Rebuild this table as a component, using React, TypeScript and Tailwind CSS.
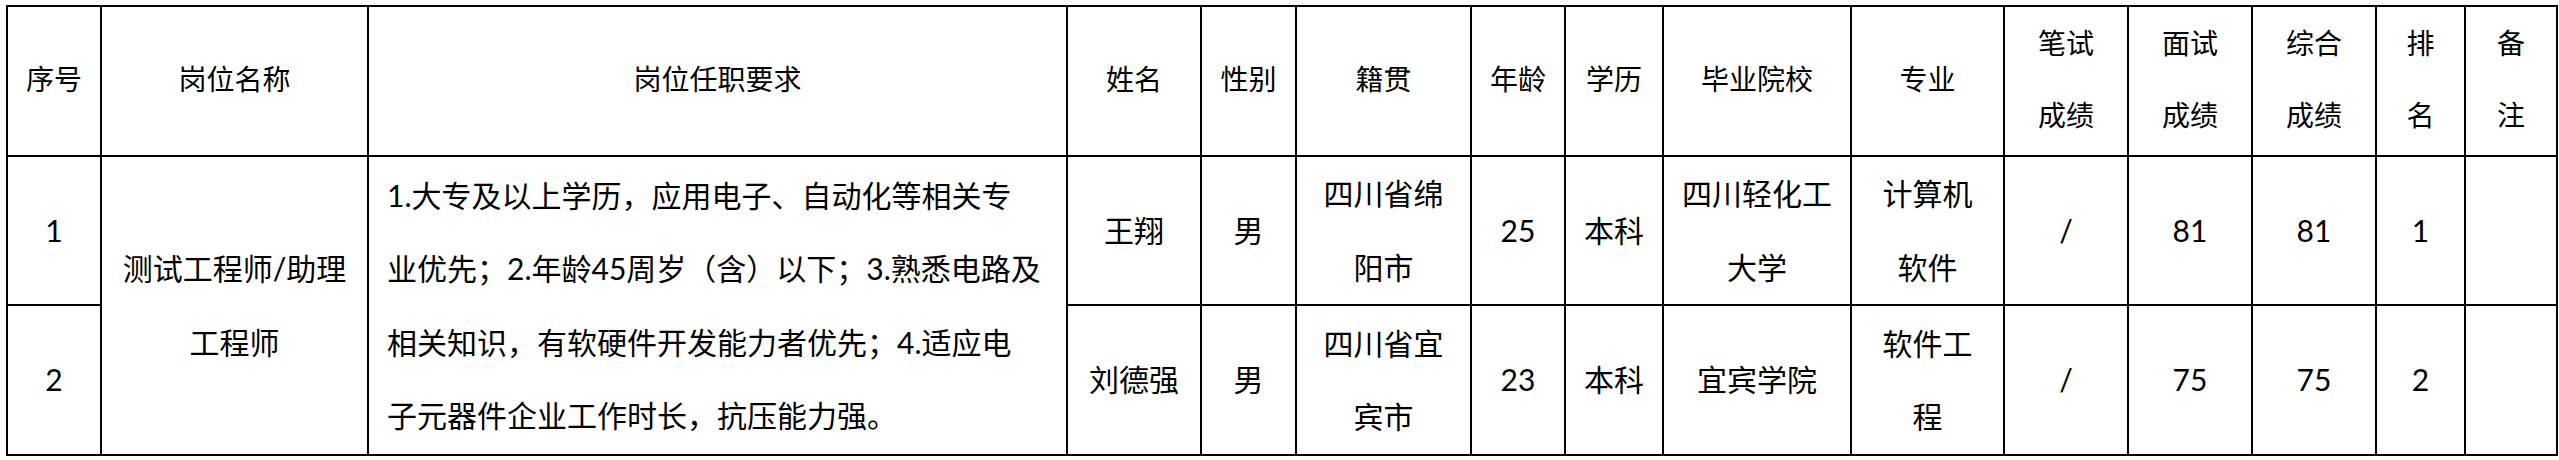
import React from 'react'

type Person = {
  no: string
  name: string
  sex: string
  home: string[]
  age: string
  edu: string
  school: string[]
  major: string[]
  written: string
  interview: string
  total: string
  rank: string
}

const people: Person[] = [
  {
    no: '1', name: '王翔', sex: '男', home: ['四川省绵', '阳市'], age: '25', edu: '本科',
    school: ['四川轻化工', '大学'], major: ['计算机', '软件'], written: '/', interview: '81', total: '81', rank: '1',
  },
  {
    no: '2', name: '刘德强', sex: '男', home: ['四川省宜', '宾市'], age: '23', edu: '本科',
    school: ['宜宾学院'], major: ['软件工', '程'], written: '/', interview: '75', total: '75', rank: '2',
  },
]

const widths = [94, 267, 699, 134, 95, 175, 94, 98, 188, 153, 124, 124, 124, 89, 92]

const headers: string[][] = [
  ['序号'], ['岗位名称'], ['岗位任职要求'], ['姓名'], ['性别'], ['籍贯'], ['年龄'], ['学历'],
  ['毕业院校'], ['专业'], ['笔试', '成绩'], ['面试', '成绩'], ['综合', '成绩'], ['排', '名'], ['备', '注'],
]

const requirement = [
  '1.大专及以上学历，应用电子、自动化等相关专',
  '业优先；2.年龄45周岁（含）以下；3.熟悉电路及',
  '相关知识，有软硬件开发能力者优先；4.适应电',
  '子元器件企业工作时长，抗压能力强。',
]

const Lines = ({ lines }: { lines: string[] }) => (
  <>
    {lines.map((l, i) => (
      <div key={i} className="whitespace-nowrap">{l}</div>
    ))}
  </>
)

const td = 'border-2 border-black p-0 text-center align-middle'

const App = () => {
  return (
    <div className="w-full h-[460px] bg-white pt-[5px] pl-[6px] text-black">
      <table className="table-fixed border-collapse w-[2550px]">
        <colgroup>
          {widths.map((w, i) => (
            <col key={i} style={{ width: w }} />
          ))}
        </colgroup>
        <thead>
          <tr className="h-[150px]">
            {headers.map((h, i) => (
              <th
                key={i}
                className={`${td} font-normal text-[28px] leading-[72px] font-['Liberation_Serif','Noto_Sans_CJK_SC',serif]`}
              >
                <Lines lines={h} />
              </th>
            ))}
          </tr>
        </thead>
        <tbody className="text-[30px] leading-[73.5px] font-['Lato','Noto_Sans_CJK_SC',sans-serif]">
          {people.map((p, idx) => (
            <tr key={p.no} className={idx === 0 ? 'h-[149px]' : 'h-[150px]'}>
              <td className={td}>{p.no}</td>
              {idx === 0 && (
                <>
                  <td rowSpan={2} className={td}>
                    <Lines lines={['测试工程师/助理', '工程师']} />
                  </td>
                  <td rowSpan={2} className={`${td} text-left pl-[18px]`}>
                    <Lines lines={requirement} />
                  </td>
                </>
              )}
              <td className={td}>{p.name}</td>
              <td className={td}>{p.sex}</td>
              <td className={td}><Lines lines={p.home} /></td>
              <td className={td}>{p.age}</td>
              <td className={td}>{p.edu}</td>
              <td className={td}><Lines lines={p.school} /></td>
              <td className={td}><Lines lines={p.major} /></td>
              <td className={td}>{p.written}</td>
              <td className={td}>{p.interview}</td>
              <td className={td}>{p.total}</td>
              <td className={td}>{p.rank}</td>
              <td className={td}></td>
            </tr>
          ))}
        </tbody>
      </table>
    </div>
  )
}

export default App
